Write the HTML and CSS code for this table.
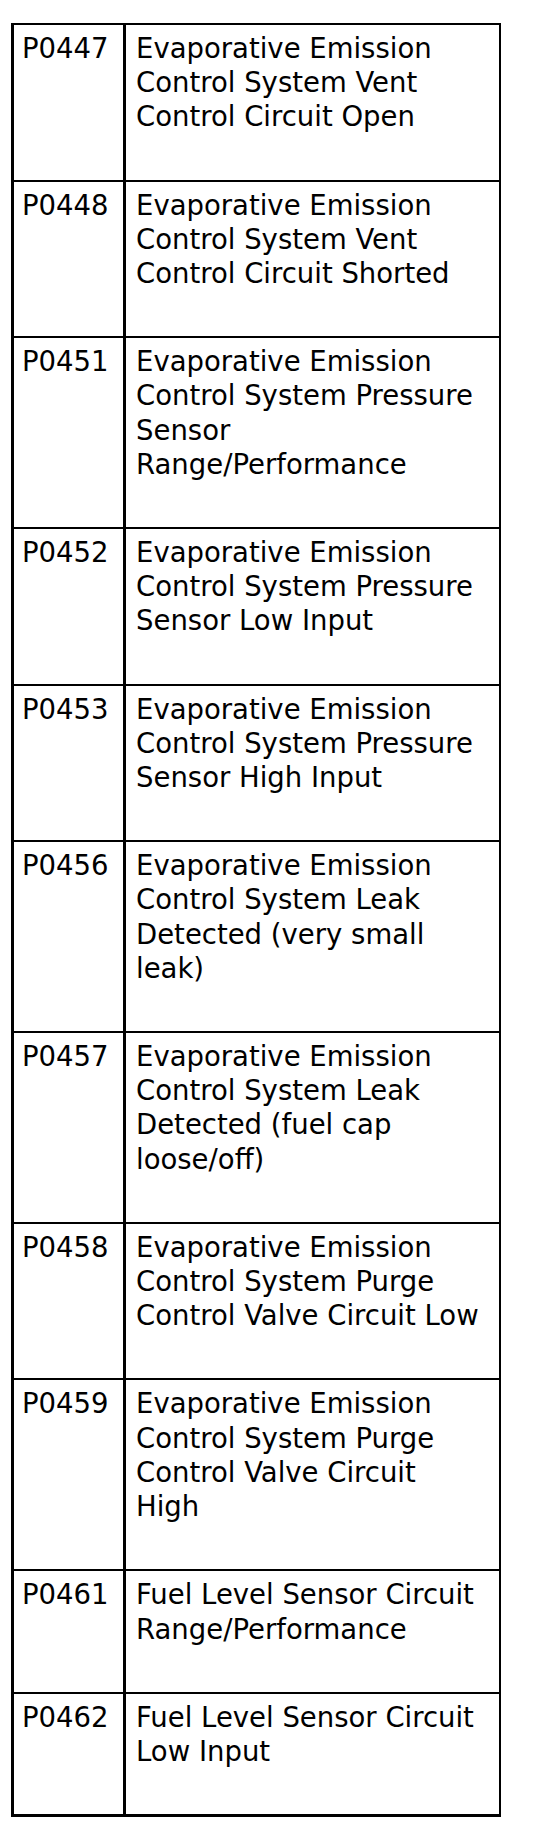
FILE: index.html
```html
<!DOCTYPE html>
<html>
<head>
<meta charset="utf-8">
<link rel="stylesheet" href="styles.css">
</head>
<body>
<div class="dtc-table">
  <div class="code">P0447</div><div class="desc">Evaporative Emission Control System Vent Control Circuit Open</div>
  <div class="code">P0448</div><div class="desc">Evaporative Emission Control System Vent Control Circuit Shorted</div>
  <div class="code">P0451</div><div class="desc">Evaporative Emission Control System Pressure Sensor Range/Performance</div>
  <div class="code">P0452</div><div class="desc">Evaporative Emission Control System Pressure Sensor Low Input</div>
  <div class="code">P0453</div><div class="desc">Evaporative Emission Control System Pressure Sensor High Input</div>
  <div class="code">P0456</div><div class="desc">Evaporative Emission Control System Leak Detected (very small leak)</div>
  <div class="code">P0457</div><div class="desc">Evaporative Emission Control System Leak Detected (fuel cap loose/off)</div>
  <div class="code">P0458</div><div class="desc">Evaporative Emission Control System Purge Control Valve Circuit Low</div>
  <div class="code">P0459</div><div class="desc">Evaporative Emission Control System Purge Control Valve Circuit High</div>
  <div class="code">P0461</div><div class="desc">Fuel Level Sensor Circuit Range/Performance</div>
  <div class="code last">P0462</div><div class="desc last">Fuel Level Sensor Circuit Low Input</div>
</div>
</body>
</html>
```
FILE: styles.css
```css
html, body {
  margin: 0;
  padding: 0;
  background: #fff;
}
body {
  font-family: "DejaVu Sans", Verdana, sans-serif;
  font-size: 27.5px;
  line-height: 34.2px;
  color: #000;
}
.dtc-table {
  display: grid;
  grid-template-columns: 112px 373px;
  width: max-content;
  margin: 23px 0 0 11px;
  border-left: 3px solid #000;
  border-top: 2px solid #000;
  border-right: 2px solid #000;
  border-bottom: 3px solid #000;
}
.code, .desc {
  border-bottom: 2px solid #000;
  padding-top: 6px;
  padding-bottom: 46px;
}
.code {
  border-right: 3px solid #000;
  padding-left: 8px;
}
.desc {
  padding-left: 10px;
  padding-right: 18px;
}
.last {
  border-bottom: none;
}
```
